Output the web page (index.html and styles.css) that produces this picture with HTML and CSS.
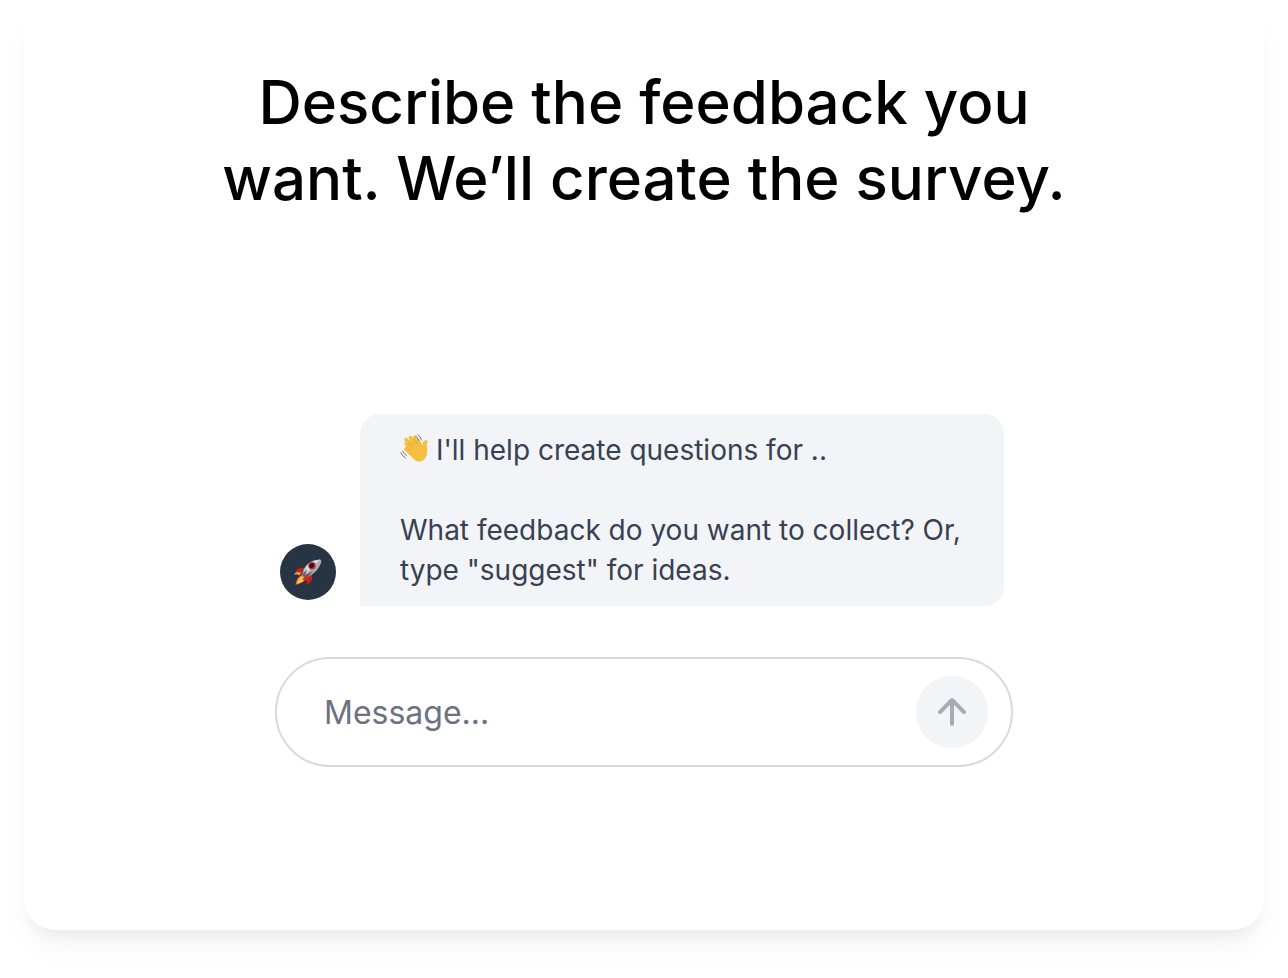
FILE: index.html
```html
<!DOCTYPE html>
<html lang="en">
<head>
<meta charset="utf-8">
<meta name="viewport" content="width=device-width, initial-scale=1">
<title>Create a survey</title>
<link rel="stylesheet" href="styles.css">
</head>
<body>
<main class="card">
  <h1 class="title">Describe the feedback you want. We’ll create the survey.</h1>
  <section class="chat">
    <div class="message">
      <div class="avatar">
        <svg class="rocket" viewBox="0 0 30 30" aria-hidden="true">
          <path d="M12 11Q5 10 2.500 14.500L1.500 17.500Q5 15 8.500 17Z" fill="#c9211a"/>
          <path d="M19 18Q20 23 16.500 26L13.500 28Q14 24 12.500 21Z" fill="#c9211a"/>
          <path d="M1.500 17Q4 13.500 8 16L6.500 18.500Q3.500 16.500 1.500 18Z" fill="#f6a83b"/>
          <path d="M9 17.500L14 21Q11 26 2.500 28Q3 21 9 17.500Z" fill="#ee5b26"/>
          <path d="M9 19L12.500 21.500Q10 25.500 3.500 27Q5 21 9 19Z" fill="#fbc257"/>
          <path d="M9 17.500Q12 3.500 27 2.500Q29 3 28 6Q25 15 14 20.500Q11 20.500 9 17.500Z" fill="#a9abb0"/>
          <path d="M11 13.500Q15 3.500 27.500 2.500Q22 7 13 17Z" fill="#d9dbde"/>
          <path d="M9 17.500L14 12L12.500 18L20 14Q17 18.500 14 20.500L10.500 19.500Z" fill="#626a75"/>
          <path d="M9 22.500L17 15.500L12 23Z" fill="#c9211a"/>
          <circle cx="19" cy="8.800" r="3.700" fill="#d32920"/>
          <ellipse cx="18.700" cy="8.600" rx="2.700" ry="2.200" transform="rotate(-40 18.700 8.600)" fill="#16191f"/>
        </svg>
      </div>
      <div class="bubble">
        <p class="line"><svg class="wave" viewBox="0 0 28 28" role="img" aria-label="Waving hand">
          <g fill="none" stroke="#f6bf40" stroke-linecap="round" stroke-width="3.800">
            <path d="M6.200 10L13 17M6.200 5.800L15 14M10.500 3.700L18 12M14.500 3.900L20 10"/>
            <path d="M6 15L10 19"/>
          </g>
          <path d="M5 15L11 8L19 7L22.500 11.500Q22.500 7.500 24.500 6.500Q27.500 6 28 7.300Q26.500 9 27 13.500Q28.500 24 22 27Q17 29 13 24.500Z" fill="#f6bf40"/>
          <path d="M7.500 8.500L13 14M9.500 6L15.500 12M13.500 5L18.500 10.500M6.500 13L10.500 17" fill="none" stroke="#d9a43b" stroke-width=".7"/>
          <path d="M15.500 2Q18 3.500 19 6.500M18 .8Q20.500 2.500 21.500 6M.8 18.500Q2 22 5.500 24M2.500 17Q4 20 6.500 21.500" fill="none" stroke="#74777c" stroke-linecap="round"/>
        </svg> I'll help create questions for ..</p>
        <p class="line">What feedback do you want to collect? Or, type "suggest" for ideas.</p>
      </div>
    </div>
    <form class="composer">
      <input class="field" type="text" placeholder="Message..." aria-label="Message">
      <button class="send" type="button" aria-label="Send message">
        <svg class="arrow" viewBox="0 0 32 32" aria-hidden="true"><path d="M16 28V4M4 16L16 4L28 16"/></svg>
      </button>
    </form>
  </section>
</main>
</body>
</html>
```
FILE: styles.css
```css
* {
  box-sizing: border-box;
}

body {
  margin: 0;
  min-height: 100vh;
  display: flex;
  padding: 0 24px 48px;
  background: #fff;
  font-family: Inter, "Liberation Sans", sans-serif;
}

.card {
  flex: 1;
  min-width: 0;
  display: flex;
  flex-direction: column;
  align-items: center;
  justify-content: space-between;
  gap: 48px;
  padding: 64px 24px 163px;
  border-radius: 32px;
  background: #fff;
  box-shadow: 0 20px 30px -6px rgba(31, 41, 55, .05), 0 12px 12px -6px rgba(31, 41, 55, .05);
}

.title {
  max-width: 880px;
  margin: 0;
  color: #000;
  font-size: 60px;
  font-weight: 500;
  line-height: 76px;
  text-align: center;
}

.chat {
  width: 100%;
  max-width: 738px;
  display: flex;
  flex-direction: column;
  gap: 51px;
}

.message {
  display: flex;
  align-items: flex-end;
  gap: 24px;
  padding: 0 9px 0 5px;
}

.avatar {
  flex: none;
  width: 56px;
  height: 56px;
  display: grid;
  place-items: center;
  margin-bottom: 6px;
  border-radius: 50%;
  background: #273444;
}

.rocket {
  width: 30px;
  height: 30px;
}

.bubble {
  flex: 1;
  display: grid;
  gap: 40px;
  padding: 16px 40px;
  border-radius: 20px 20px 20px 0;
  background: #f2f4f8;
  color: #374151;
  font-size: 28px;
  line-height: 40px;
}

.line {
  margin: 0;
}

.wave {
  width: 28px;
  height: 28px;
  overflow: visible;
  vertical-align: -2px;
}

.composer {
  display: flex;
  align-items: center;
  gap: 24px;
  height: 110px;
  padding: 0 23px 0 47px;
  border: 2px solid #d9dadb;
  border-radius: 55px;
}

.field {
  flex: 1;
  min-width: 0;
  padding: 0;
  border: 0;
  outline: 0;
  background: transparent;
  color: #374151;
  font: inherit;
  font-size: 32px;
}

.field::placeholder {
  color: #6b7280;
  opacity: 1;
}

.send {
  flex: none;
  width: 72px;
  height: 72px;
  display: grid;
  place-items: center;
  padding: 0;
  border: 0;
  border-radius: 50%;
  background: #f2f4f8;
}

.arrow {
  width: 32px;
  height: 32px;
  fill: none;
  stroke: #a6acb5;
  stroke-width: 4;
  stroke-linecap: round;
  stroke-linejoin: round;
}
```
